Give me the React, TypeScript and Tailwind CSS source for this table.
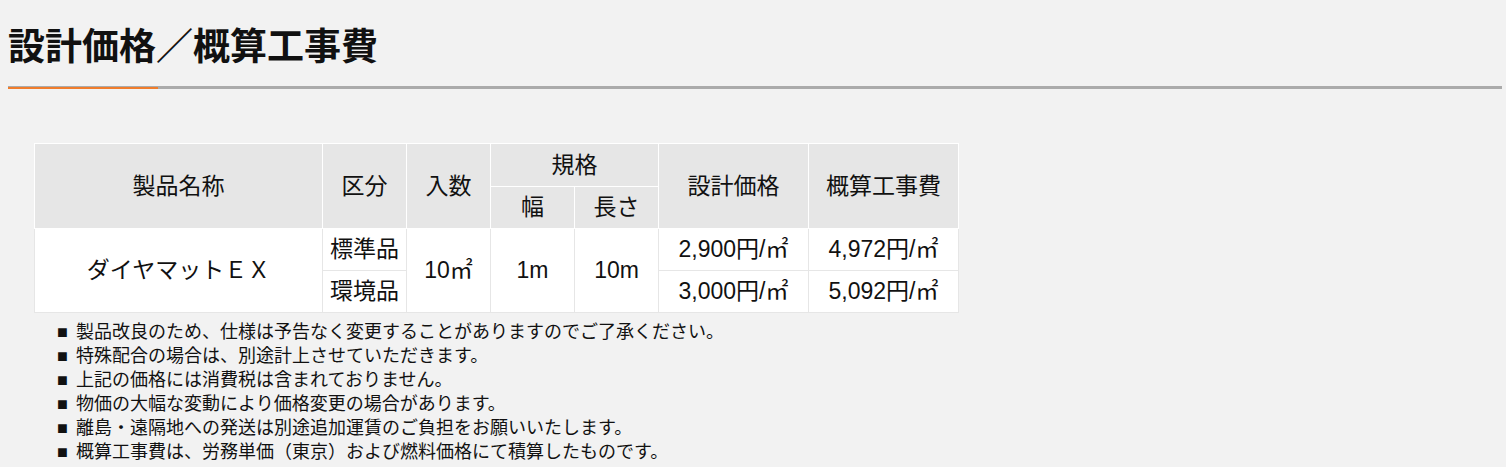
const FONT = "font-['Liberation_Sans','Noto_Sans_CJK_JP',sans-serif]";

const notes = [
  "製品改良のため、仕様は予告なく変更することがありますのでご了承ください。",
  "特殊配合の場合は、別途計上させていただきます。",
  "上記の価格には消費税は含まれておりません。",
  "物価の大幅な変動により価格変更の場合があります。",
  "離島・遠隔地への発送は別途追加運賃のご負担をお願いいたします。",
  "概算工事費は、労務単価（東京）および燃料価格にて積算したものです。",
];

const th = "bg-[#e6e6e6] border border-white font-normal text-[23px] text-[#111] p-0";
const td = "bg-white border border-[#e6e6e6] text-[23px] text-[#111] text-center p-0";

export default function App() {
  return (
    <div className={`min-h-screen w-full bg-[#f2f2f2] ${FONT}`}>
      <h2 className="pt-[19px] pl-2 text-[37px] leading-[50px] font-bold text-[#111] font-['Noto_Sans_CJK_JP',sans-serif]">
        設計価格／概算工事費
      </h2>
      <div className="relative mt-[17px] ml-2 mr-1 h-[3px] bg-[#ababab]">
        <div className="absolute left-0 bottom-0 h-[2px] w-[150px] bg-[#f07d2c]" />
      </div>

      <table className="mt-[54px] ml-[34px] border-collapse table-fixed">
        <colgroup>
          <col className="w-[288px]" />
          <col className="w-[84px]" />
          <col className="w-[84px]" />
          <col className="w-[84px]" />
          <col className="w-[84px]" />
          <col className="w-[150px]" />
          <col className="w-[150px]" />
        </colgroup>
        <thead>
          <tr className="h-[43px]">
            <th rowSpan={2} className={th}>製品名称</th>
            <th rowSpan={2} className={th}>区分</th>
            <th rowSpan={2} className={th}>入数</th>
            <th colSpan={2} className={th}>規格</th>
            <th rowSpan={2} className={th}>設計価格</th>
            <th rowSpan={2} className={th}>概算工事費</th>
          </tr>
          <tr className="h-[42px]">
            <th className={th}>幅</th>
            <th className={th}>長さ</th>
          </tr>
        </thead>
        <tbody>
          <tr className="h-[42px]">
            <td rowSpan={2} className={td}>ダイヤマットＥＸ</td>
            <td className={td}>標準品</td>
            <td rowSpan={2} className={td}>10㎡</td>
            <td rowSpan={2} className={td}>1m</td>
            <td rowSpan={2} className={td}>10m</td>
            <td className={td}>2,900円/㎡</td>
            <td className={td}>4,972円/㎡</td>
          </tr>
          <tr className="h-[42px]">
            <td className={td}>環境品</td>
            <td className={td}>3,000円/㎡</td>
            <td className={td}>5,092円/㎡</td>
          </tr>
        </tbody>
      </table>

      <ul className="mt-[7px] pl-[57px] text-[18px] leading-[24px] text-[#111]">
        {notes.map((n) => (
          <li key={n} className="flex">
            <span className="w-[19px] shrink-0">■</span>
            <span>{n}</span>
          </li>
        ))}
      </ul>
    </div>
  );
}
